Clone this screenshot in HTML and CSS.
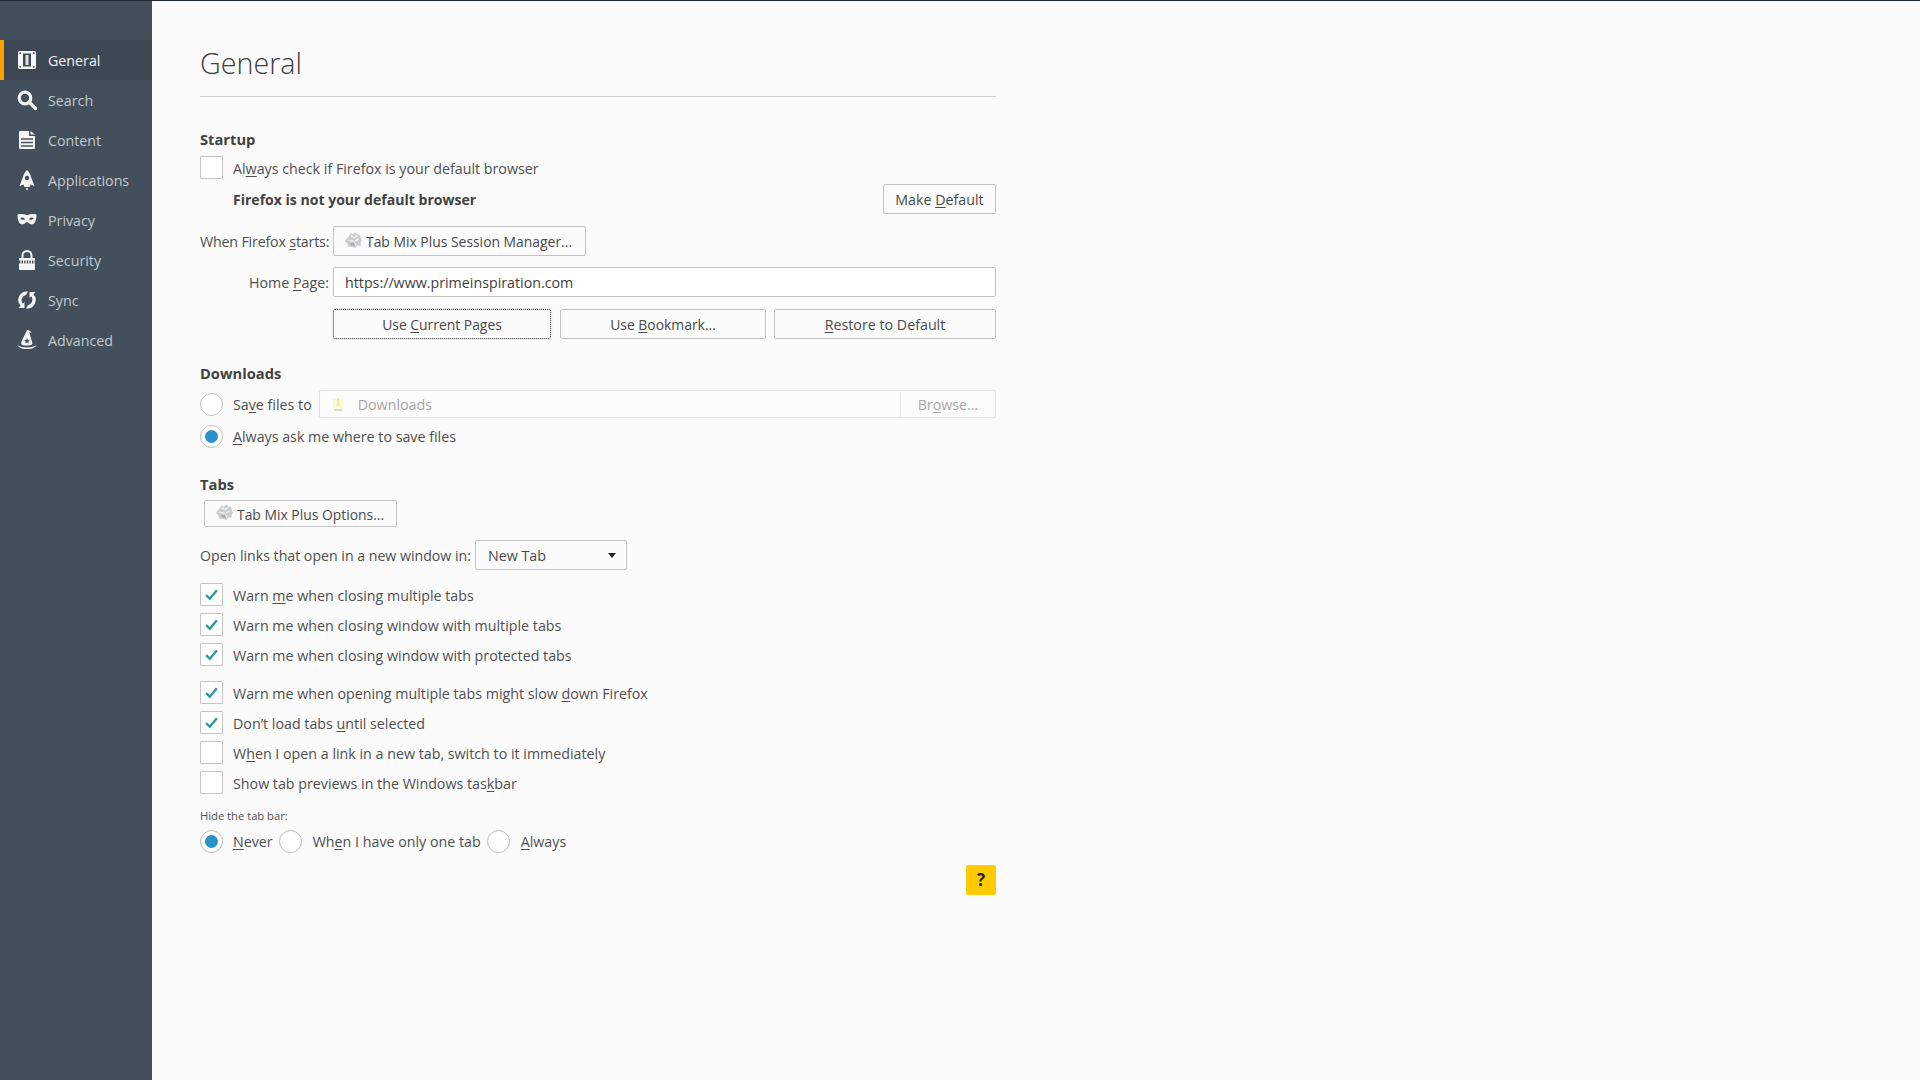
FILE: index.html
```html
<!DOCTYPE html>
<html lang="en">
<head>
<meta charset="utf-8">
<title>Options</title>
<link rel="stylesheet" href="styles.css">
</head>
<body>
<svg class="defs" width="0" height="0" aria-hidden="true">
  <defs>
    <symbol id="tmp" viewBox="0 0 16 16">
      <path d="M3 5l2-3 2 1 2-2 2 2 2 0 1 3 1 2-1 2 0 3-3 0-2 2-3-1-3 0-1-3-2-2 1-2z" fill="#c9cdcf"/>
      <path d="M5 4l3 2 3-2M3 8l4 1 3 4M12 7l-3 2" stroke="#f2f3f3" stroke-width="1.1" fill="none"/>
      <path d="M4 11l2 2 3 0-1-3z" fill="#a9aeb1"/>
    </symbol>
  </defs>
</svg>
<div class="topline"></div>
<div class="window">
  <nav class="sidebar">
    <a class="nav-item active">
      <svg class="nav-icon" viewBox="0 0 20 20"><rect x="1" y="1" width="18" height="18" rx="1.5" fill="#f3f5f6"/><rect x="6" y="3.5" width="8" height="13" fill="#3e4a54"/><rect x="8.5" y="5" width="3" height="10" fill="#dfe3e6"/><circle cx="3.2" cy="3.2" r=".9" fill="#3e4a54"/><circle cx="16.8" cy="3.2" r=".9" fill="#3e4a54"/><circle cx="3.2" cy="16.8" r=".9" fill="#3e4a54"/><circle cx="16.8" cy="16.8" r=".9" fill="#3e4a54"/></svg>
      <span>General</span>
    </a>
    <a class="nav-item">
      <svg class="nav-icon" viewBox="0 0 20 20"><circle cx="8" cy="8" r="5.8" fill="none" stroke="#f3f5f6" stroke-width="3.2"/><path d="M12 12l6.5 6.5" stroke="#f3f5f6" stroke-width="3.2" stroke-linecap="round"/></svg>
      <span>Search</span>
    </a>
    <a class="nav-item">
      <svg class="nav-icon" viewBox="0 0 20 20"><path d="M2 2a1 1 0 0 1 1-1h9v5h6v12a1 1 0 0 1-1 1H3a1 1 0 0 1-1-1z" fill="#f3f5f6"/><path d="M13.5 1l4.500 3.600h-4.500z" fill="#f3f5f6"/><path d="M4 9h12M4 12.500h12M4 16h12" stroke="#45525d" stroke-width="1.4"/></svg>
      <span>Content</span>
    </a>
    <a class="nav-item">
      <svg class="nav-icon" viewBox="0 0 20 20"><path d="M10 0c2 2 3.500 4 4 7l3.500 9-4-1.500-1 2.500h-5l-1-2.500-4 1.500L6 7c.5-3 2-5 4-7z" fill="#f3f5f6"/><path d="M10 18l1.300.8L10 20.500l-1.300-1.700z" fill="#f3f5f6"/><circle cx="10" cy="8" r="2.200" fill="#45525d"/></svg>
      <span>Applications</span>
    </a>
    <a class="nav-item">
      <svg class="nav-icon" viewBox="0 0 20 20"><path fill-rule="evenodd" d="M.5 4.500c3-.8 6.500-.6 9.500.8 3-1.400 6.500-1.600 9.500-.8 0 5.500-1.500 10-5 10-2.500 0-3-2.500-4.500-2.500S8 14.500 5.500 14.500c-3.500 0-5-4.500-5-10zm2.800 3.700c1 1.600 3.500 2 4.700 1-1-2-3.500-2.300-4.700-1zm13.400 0c-1.200-1.300-3.700-1-4.700 1 1.200 1 3.700.6 4.700-1z" fill="#f3f5f6"/></svg>
      <span>Privacy</span>
    </a>
    <a class="nav-item">
      <svg class="nav-icon" viewBox="0 0 20 20"><path d="M5.500 8V5.500a4.500 4.500 0 0 1 9 0V8" fill="none" stroke="#f3f5f6" stroke-width="2"/><path d="M2 8h16v11a1 1 0 0 1-1 1H3a1 1 0 0 1-1-1z" fill="#f3f5f6"/><path d="M2 12h16" stroke="#45525d" stroke-width="3.200" stroke-dasharray="1.400 1.200"/></svg>
      <span>Security</span>
    </a>
    <a class="nav-item">
      <svg class="nav-icon" viewBox="0 0 20 20"><path d="M11 1.500A8.500 8.500 0 0 0 3.600 15.700L1.500 18h6v-6l-1.700 1.800A5.500 5.500 0 0 1 9 5z" fill="#f3f5f6"/><path d="M9 18.500a8.500 8.500 0 0 0 7.400-14.200L18.500 2h-6v6l1.700-1.800A5.500 5.500 0 0 1 11 15z" fill="#f3f5f6"/></svg>
      <span>Sync</span>
    </a>
    <a class="nav-item">
      <svg class="nav-icon" viewBox="0 0 20 20"><path d="M10 0c2.500 0 4 1.500 4.500 3l-2.300-.7 2.800 9.200c.7 2 .6 3-1 3.500-2.800.8-6.200.8-8.500 0-1.600-.5-1.500-1.500-1-3.500z" fill="#f3f5f6"/><path d="M10 8l.8 2 2 .2-1.500 1.300.5 2-1.800-1-1.800 1 .5-2-1.500-1.300 2-.2z" fill="#45525d"/><path d="M.5 15c1 2.500 4 4 9.500 4s8.500-1.500 9.500-4c-2 1.500-5 2.500-9.500 2.500S2.500 16.500.5 15z" fill="#f3f5f6"/></svg>
      <span>Advanced</span>
    </a>
  </nav>

  <main class="content">
    <h1 class="title">General</h1>

    <section class="startup">
      <h2 class="heading">Startup</h2>
      <label class="option first"><span class="box"></span><span class="opt-text">Al<u>w</u>ays check if Firefox is your default browser</span></label>
      <div class="default-row">
        <strong class="not-default">Firefox is not your default browser</strong>
        <button class="btn make-default">Make <u>D</u>efault</button>
      </div>
      <div class="form-row start-row">
        <span class="form-label starts-label">When Firefox <u>s</u>tarts:</span>
        <button class="btn session-btn"><svg class="tmp-icon"><use href="#tmp"/></svg>Tab Mix Plus Session Manager...</button>
      </div>
      <div class="form-row home-row">
        <span class="form-label">Home <u>P</u>age:</span>
        <div class="text-input">https://www.primeinspiration.com</div>
      </div>
      <div class="home-buttons">
        <button class="btn current">Use <u>C</u>urrent Pages</button>
        <button class="btn bookmark">Use <u>B</u>ookmark...</button>
        <button class="btn restore"><u>R</u>estore to Default</button>
      </div>
    </section>

    <section class="downloads">
      <h2 class="heading">Downloads</h2>
      <div class="save-row">
        <span class="radio"></span>
        <span class="opt-text save-text">Sa<u>v</u>e files to</span>
        <div class="folder-field">
          <div class="folder-name">
            <svg class="folder-icon" viewBox="0 0 16 16"><path d="M3 2h10v11H3z" fill="#fbf9d2"/><path d="M7 1h2v8H7z" fill="#ecebb0"/><path d="M4 12h8v2H4z" fill="#d9dbd8"/></svg>
            Downloads
          </div>
          <div class="browse">Br<u>o</u>wse...</div>
        </div>
      </div>
      <label class="option always"><span class="radio on"></span><span><u>A</u>lways ask me where to save files</span></label>
    </section>

    <section class="tabs">
      <h2 class="heading">Tabs</h2>
      <button class="btn options-btn"><svg class="tmp-icon"><use href="#tmp"/></svg>Tab Mix Plus Options...</button>
      <div class="select-row">
        <span class="opt-text select-label">Open links that open in a new window in:</span>
        <div class="select"><span class="opt-text">New Tab</span><span class="caret"></span></div>
      </div>
      <div class="group warn-group">
        <label class="option"><span class="box checked"><svg class="tick" viewBox="0 0 14 14"><path d="M2 7.500l3.500 3.500L12 3" fill="none"/></svg></span><span class="opt-text">Warn <u>m</u>e when closing multiple tabs</span></label>
        <label class="option"><span class="box checked"><svg class="tick" viewBox="0 0 14 14"><path d="M2 7.500l3.500 3.500L12 3" fill="none"/></svg></span><span class="opt-text">Warn me when closing window with multiple tabs</span></label>
        <label class="option"><span class="box checked"><svg class="tick" viewBox="0 0 14 14"><path d="M2 7.500l3.500 3.500L12 3" fill="none"/></svg></span><span class="opt-text">Warn me when closing window with protected tabs</span></label>
      </div>
      <div class="group load-group">
        <label class="option"><span class="box checked"><svg class="tick" viewBox="0 0 14 14"><path d="M2 7.500l3.500 3.500L12 3" fill="none"/></svg></span><span class="opt-text">Warn me when opening multiple tabs might slow <u>d</u>own Firefox</span></label>
        <label class="option"><span class="box checked"><svg class="tick" viewBox="0 0 14 14"><path d="M2 7.500l3.500 3.500L12 3" fill="none"/></svg></span><span class="opt-text">Don’t load tabs <u>u</u>ntil selected</span></label>
        <label class="option"><span class="box"></span><span class="opt-text">W<u>h</u>en I open a link in a new tab, switch to it immediately</span></label>
        <label class="option"><span class="box"></span><span class="opt-text">Show tab previews in the Windows tas<u>k</u>bar</span></label>
      </div>
      <div class="hide-label">Hide the tab bar:</div>
      <div class="radio-row">
        <label class="option"><span class="radio on"></span><span><u>N</u>ever</span></label>
        <label class="option wide"><span class="radio"></span><span>Wh<u>e</u>n I have only one tab</span></label>
        <label class="option wide"><span class="radio"></span><span><u>A</u>lways</span></label>
      </div>
    </section>

    <div class="help-row"><button class="help">?</button></div>
  </main>
</div>
</body>
</html>
```

FILE: styles.css
```css
* { box-sizing: border-box; }
html, body { margin: 0; height: 100%; overflow: hidden; }
body {
  background: #fbfbfb;
  color: #4f4f4f;
  font-family: "Open Sans", "Noto Sans", sans-serif;
  font-size: 14.25px;
  line-height: 20px;
  display: flex;
  flex-direction: column;
}
u { text-underline-offset: 2px; text-decoration-thickness: 1px; }
.defs { position: absolute; }
.topline { height: 1px; background: #1f2a31; flex: none; }
.window { display: flex; flex: 1; min-height: 0; }

.sidebar {
  width: 152px;
  flex: none;
  background: #434f5b;
  padding-top: 39px;
}
.nav-item {
  height: 40px;
  display: flex;
  align-items: center;
  gap: 11px;
  padding-left: 13px;
  border-left: 4px solid transparent;
  color: #c1c8ce;
}
.nav-item span { padding-top: 2px; }
.nav-item.active {
  background: #3d4853;
  border-left-color: #ff9f00;
  color: #f1f2f3;
}
.nav-icon { width: 20px; height: 20px; flex: none; overflow: visible; }

.content { width: 796px; margin-left: 48px; display: flex; flex-direction: column; }
.title {
  margin: 0;
  padding: 42px 0 13px;
  border-bottom: 1px solid #cfcfcf;
  font-size: 28.7px;
  line-height: 40px;
  font-weight: 300;
  color: #404040;
}
.heading { margin: 0; height: 20px; font-size: 14.7px; line-height: 18px; font-weight: 700; color: #424242; }
.downloads .heading { line-height: 20px; }
.startup { margin-top: 33px; }
.downloads { margin-top: 24px; }
.tabs { margin-top: 27px; }

.option { display: flex; align-items: center; height: 23px; gap: 10px; white-space: nowrap; }
.option.first { margin-top: 6px; }
.opt-text { padding-top: 2px; white-space: nowrap; }
.box, .radio { width: 23px; height: 23px; flex: none; background: #fff; border: 1px solid #c4c4c4; }
.box { display: flex; align-items: center; justify-content: center; border-radius: 1px; }
.radio { border-radius: 50%; border-color: #bdbdbd; }
.radio.on { display: flex; align-items: center; justify-content: center; }
.radio.on::after { content: ""; width: 13px; height: 13px; border-radius: 50%; background: #2a90cc; }
.tick { width: 15px; height: 15px; }
.tick path { stroke: #37979f; stroke-width: 2.300; }

.default-row { display: flex; align-items: center; justify-content: space-between; height: 30px; margin-top: 5px; padding-left: 33px; }
.not-default { font-size: 14.05px; font-weight: 700; color: #424242; padding-top: 2px; }

.btn {
  height: 30px;
  padding: 2px 0 0;
  background: #fbfbfb;
  border: 1px solid #c3c3c3;
  border-radius: 2px;
  font: inherit;
  color: #4a4a4a;
  white-space: nowrap;
}
.make-default { width: 113px; }
.form-row { display: flex; align-items: center; gap: 4px; height: 30px; }
.start-row { margin-top: 12px; }
.home-row { margin-top: 11px; }
.form-label { width: 129px; text-align: right; flex: none; white-space: nowrap; padding-top: 2px; }
.starts-label { letter-spacing: -0.18px; }
.session-btn { width: 253px; display: flex; align-items: center; padding-left: 11px; gap: 3px; font-size: 13.9px; }
.tmp-icon { width: 18px; height: 18px; flex: none; margin-top: -5px; }
.text-input {
  flex: 1;
  height: 30px;
  background: #fff;
  border: 1px solid #c3c3c3;
  border-radius: 2px;
  padding: 1px 11px 0;
  line-height: 28px;
  color: #3e3e3e;
}
.home-buttons { display: flex; gap: 8px; margin-top: 12px; margin-left: 133px; }
.current { width: 218px; border: 1px dotted #333; box-shadow: 0 0 2px #c0c0c0; font-size: 13.9px; }
.bookmark { width: 206px; margin-left: 1px; font-size: 13.9px; }
.restore { flex: 1; }

.save-row { display: flex; align-items: center; height: 28px; margin-top: 7px; gap: 10px; }
.save-text { margin-right: -3px; }
.folder-field { flex: 1; display: flex; height: 28px; border: 1px solid #e3e3e3; background: #fcfcfc; border-radius: 2px; color: #a6a6a6; padding-top: 1px; }
.folder-name { flex: 1; display: flex; align-items: center; gap: 12px; padding-left: 10px; }
.folder-icon { width: 16px; height: 16px; flex: none; }
.browse { width: 95px; border-left: 1px solid #e8e8e8; text-align: center; line-height: 26px; }
.always { margin-top: 7px; }

.options-btn { width: 193px; height: 27px; margin: 5px 0 0 4px; display: flex; align-items: center; padding-left: 11px; gap: 3px; font-size: 13.9px; }
.select-row { display: flex; align-items: center; gap: 4px; height: 30px; margin-top: 13px; white-space: nowrap; }
.select-label { font-size: 14.15px; }
.select {
  width: 152px;
  height: 30px;
  display: flex;
  align-items: center;
  justify-content: space-between;
  padding: 0 10px 0 12px;
  background: #fbfbfb;
  border: 1px solid #c3c3c3;
  border-radius: 2px;
  color: #4a4a4a;
}
.caret { width: 0; height: 0; border: 4.500px solid transparent; border-top: 5px solid #222; border-bottom: 0; }
.group { display: flex; flex-direction: column; gap: 7px; }
.warn-group { margin-top: 13px; }
.load-group { margin-top: 15px; }
.hide-label { margin-top: 13px; font-size: 11.2px; line-height: 18px; height: 16px; }
.radio-row { display: flex; gap: 6px; margin-top: 7px; }
.option.wide { gap: 11px; }
.help-row { display: flex; justify-content: flex-end; margin-top: 12px; }
.help {
  width: 30px;
  height: 30px;
  padding: 0;
  border: 0;
  border-radius: 2px;
  background: #ffcb00;
  color: #222;
  font: 700 17px/28px "Open Sans", sans-serif;
}
```
